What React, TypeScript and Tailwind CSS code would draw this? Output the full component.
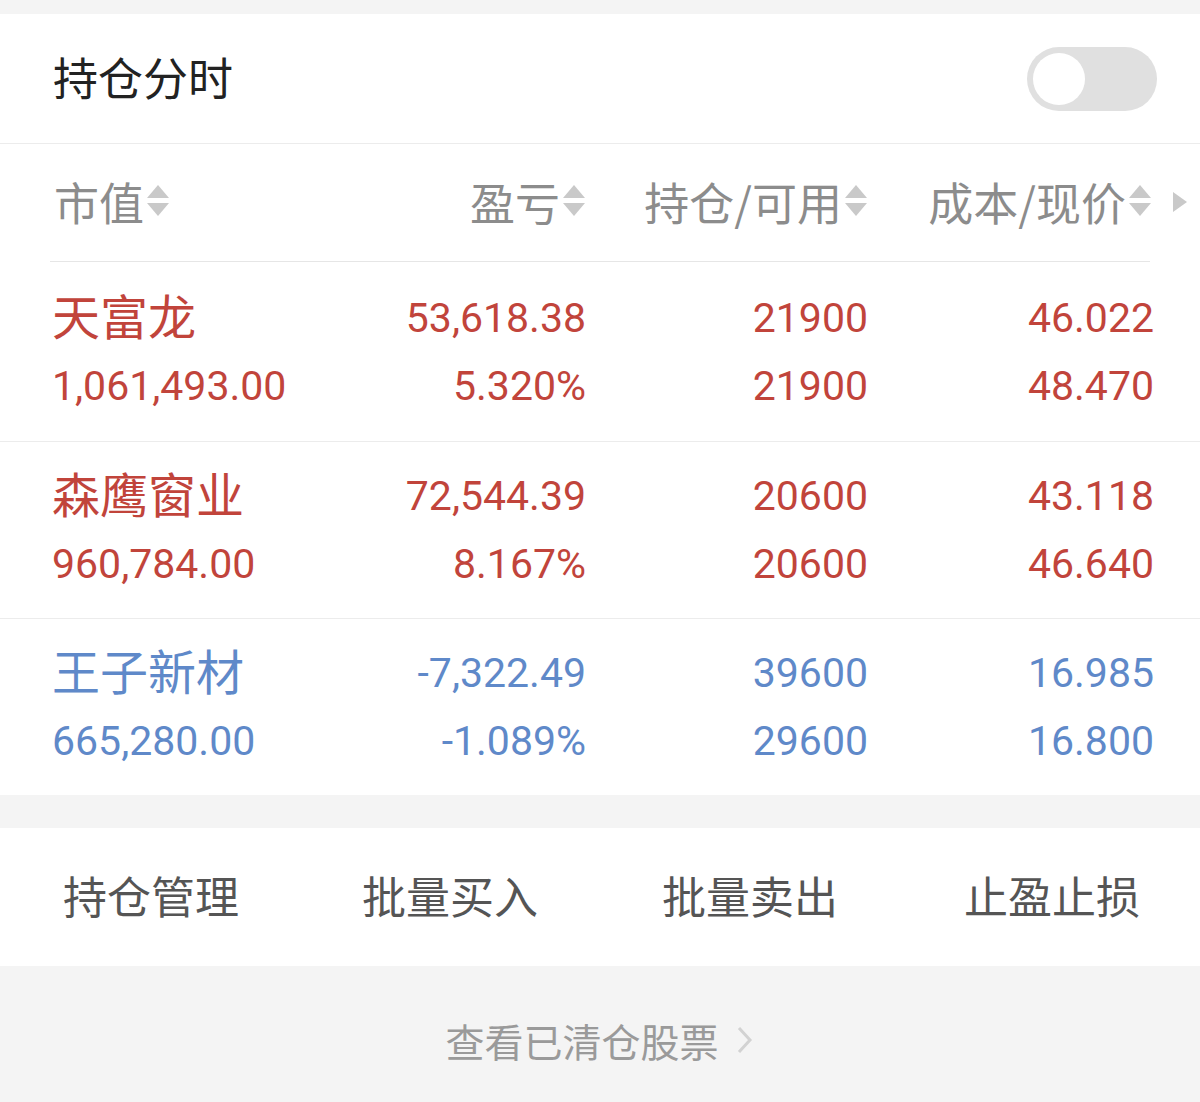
import React from "react";

const CJK = "font-['Noto_Sans_CJK_SC','Noto_Sans',sans-serif]";
const NUM = "font-['Roboto','Noto_Sans_CJK_SC',sans-serif]";

function SortIcon() {
  return (
    <svg width="24" height="36" viewBox="0 0 24 36" className="ml-[2px] shrink-0">
      <polygon points="1,15 23,15 12,2" fill="#c9c9c9" />
      <polygon points="1,20 23,20 12,33" fill="#c9c9c9" />
    </svg>
  );
}

type Row = {
  name: string;
  mv: string;
  pl: string;
  pct: string;
  hold: string;
  avail: string;
  cost: string;
  price: string;
  color: string;
};

const rows: Row[] = [
  { name: "天富龙", mv: "1,061,493.00", pl: "53,618.38", pct: "5.320%", hold: "21900", avail: "21900", cost: "46.022", price: "48.470", color: "text-[#c1443b]" },
  { name: "森鹰窗业", mv: "960,784.00", pl: "72,544.39", pct: "8.167%", hold: "20600", avail: "20600", cost: "43.118", price: "46.640", color: "text-[#c1443b]" },
  { name: "王子新材", mv: "665,280.00", pl: "-7,322.49", pct: "-1.089%", hold: "39600", avail: "29600", cost: "16.985", price: "16.800", color: "text-[#5f89c9]" },
];

export default function App() {
  return (
    <div className={`w-[1200px] h-[1102px] bg-[#f4f4f4] pt-[14px] ${CJK}`}>
      {/* Title */}
      <div className="bg-white h-[130px] flex items-center justify-between pl-[53px] pr-[43px] border-b border-[#ececec]">
        <div className="text-[45px] leading-none text-[#222222] -mt-[4px]">持仓分时</div>
        <div className="w-[130px] h-[64px] rounded-full bg-[#e0e0e0] flex items-center pl-[6px]">
          <div className="w-[52px] h-[52px] rounded-full bg-white" />
        </div>
      </div>

      {/* Header */}
      <div className="bg-white relative">
        <div className="h-[117px] grid grid-cols-[250px_284px_282px_286px] pl-[52px] items-center text-[45px] leading-none text-[#8c8c8c]">
          <div className="flex items-center pl-[2px] -mt-[3px]">
            <span>市值</span>
            <SortIcon />
          </div>
          <div className="flex items-center justify-end -mt-[3px]">
            <span>盈亏</span>
            <SortIcon />
          </div>
          <div className="flex items-center justify-end -mt-[3px]">
            <span>持仓/可用</span>
            <SortIcon />
          </div>
          <div className="flex items-center justify-end pr-[2px] -mt-[3px]">
            <span>成本/现价</span>
            <SortIcon />
          </div>
        </div>
        <svg width="16" height="22" viewBox="0 0 16 22" className="absolute left-[1172px] top-[47px]">
          <polygon points="1,1 15,11 1,21" fill="#c9c9c9" />
        </svg>
        <div className="mx-[50px] h-px bg-[#e6e6e6]" />
      </div>

      {/* Rows */}
      <div className="bg-white">
        {rows.map((r, i) => (
          <div
            key={r.name}
            className={`grid grid-cols-[250px_284px_282px_286px] pl-[52px] ${r.color} ${i < rows.length - 1 ? "border-b border-[#ececec]" : ""} ${i === 0 ? "pt-[22px] pb-[21px]" : "py-[20px]"}`}
          >
            <div className="flex flex-col">
              <div className="h-[68px] flex items-center text-[48px] leading-none -mt-[4px] mb-[4px]">{r.name}</div>
              <div className={`h-[68px] flex items-center text-[41px] leading-none ${NUM}`}>{r.mv}</div>
            </div>
            <div className={`flex flex-col items-end text-[41px] leading-none ${NUM}`}>
              <div className="h-[68px] flex items-center">{r.pl}</div>
              <div className="h-[68px] flex items-center">{r.pct}</div>
            </div>
            <div className={`flex flex-col items-end text-[41px] leading-none ${NUM}`}>
              <div className="h-[68px] flex items-center">{r.hold}</div>
              <div className="h-[68px] flex items-center">{r.avail}</div>
            </div>
            <div className={`flex flex-col items-end text-[41px] leading-none ${NUM}`}>
              <div className="h-[68px] flex items-center">{r.cost}</div>
              <div className="h-[68px] flex items-center">{r.price}</div>
            </div>
          </div>
        ))}
      </div>

      {/* Actions */}
      <div className="mt-[33px] bg-white h-[138px] grid grid-cols-4 items-center text-[44px] leading-none text-[#555555]">
        <div className="text-center pl-[2px] -mt-[4px]">持仓管理</div>
        <div className="text-center -mt-[4px]">批量买入</div>
        <div className="text-center -mt-[4px]">批量卖出</div>
        <div className="text-center pl-[4px] -mt-[4px]">止盈止损</div>
      </div>

      {/* Cleared stocks */}
      <div className="h-[136px] flex items-center justify-center pt-[12px] text-[39px] leading-none text-[#9a9a9a]">
        <span>查看已清仓股票</span>
        <svg width="20" height="30" viewBox="0 0 20 30" className="ml-[16px]">
          <polyline points="4,3 15,15 4,27" fill="none" stroke="#d2d2d2" strokeWidth="3" />
        </svg>
      </div>
    </div>
  );
}
